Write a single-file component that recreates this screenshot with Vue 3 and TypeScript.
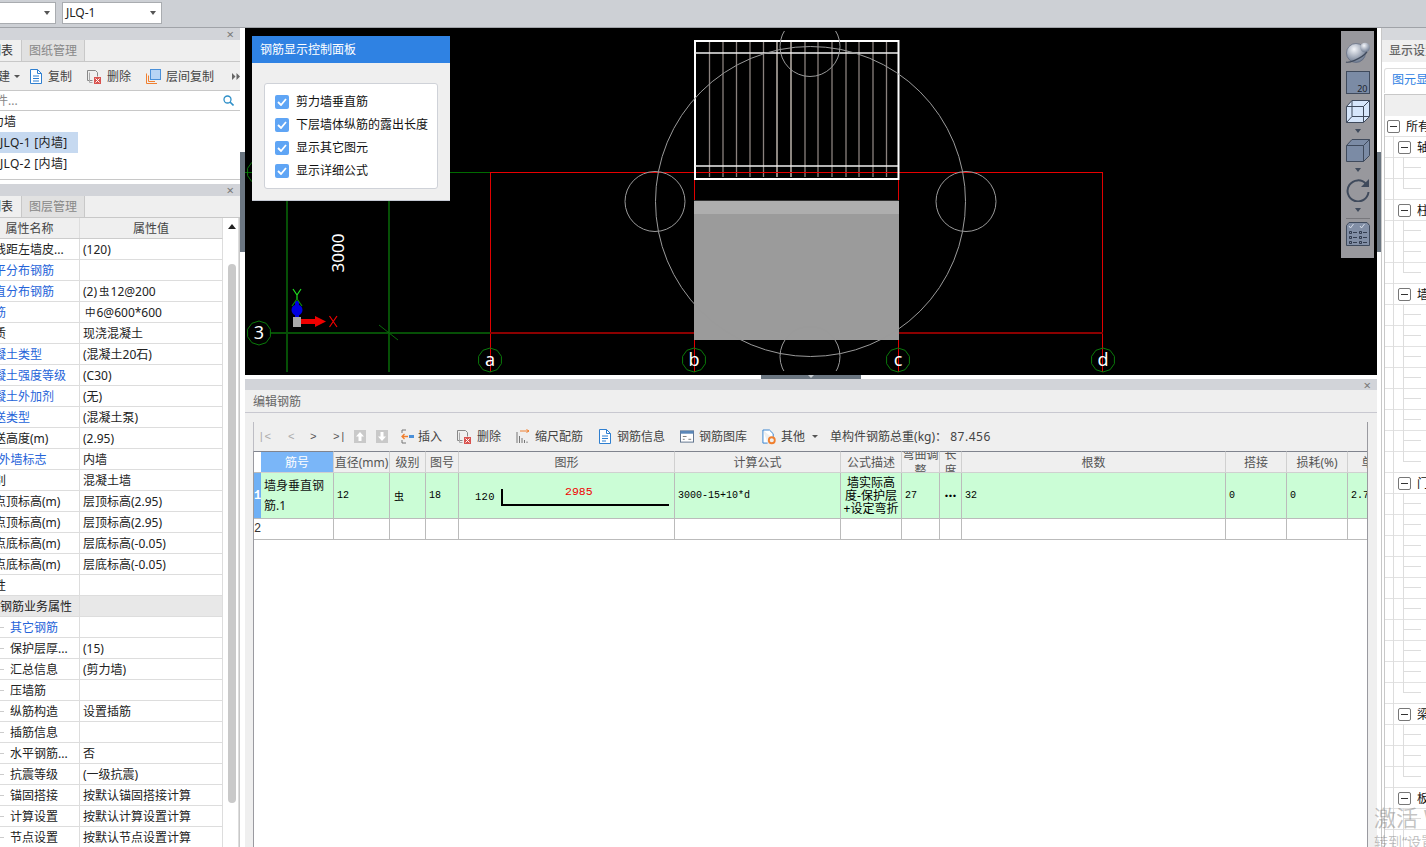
<script setup lang="ts">
interface Prop { n: string; v?: string; pre?: string; mark?: string; blue?: boolean; sub?: boolean; group?: boolean }
const props: Prop[] = [
  { n: '轴线距左墙皮...', v: '(120)' },
  { n: '水平分布钢筋', blue: true },
  { n: '垂直分布钢筋', v: '12@200', pre: '(2)', mark: '虫', blue: true },
  { n: '拉筋', v: '6@600*600', mark: '中', blue: true },
  { n: '材质', v: '现浇混凝土' },
  { n: '混凝土类型', v: '(混凝土20石)', blue: true },
  { n: '混凝土强度等级', v: '(C30)', blue: true },
  { n: '混凝土外加剂', v: '(无)', blue: true },
  { n: '泵送类型', v: '(混凝土泵)', blue: true },
  { n: '泵送高度(m)', v: '(2.95)' },
  { n: '内/外墙标志', v: '内墙', blue: true },
  { n: '类别', v: '混凝土墙' },
  { n: '起点顶标高(m)', v: '层顶标高(2.95)' },
  { n: '终点顶标高(m)', v: '层顶标高(2.95)' },
  { n: '起点底标高(m)', v: '层底标高(-0.05)' },
  { n: '终点底标高(m)', v: '层底标高(-0.05)' },
  { n: '属性' },
  { n: '钢筋业务属性', group: true },
  { n: '其它钢筋', blue: true, sub: true },
  { n: '保护层厚...', v: '(15)', sub: true },
  { n: '汇总信息', v: '(剪力墙)', sub: true },
  { n: '压墙筋', sub: true },
  { n: '纵筋构造', v: '设置插筋', sub: true },
  { n: '插筋信息', sub: true },
  { n: '水平钢筋...', v: '否', sub: true },
  { n: '抗震等级', v: '(一级抗震)', sub: true },
  { n: '锚固搭接', v: '按默认锚固搭接计算', sub: true },
  { n: '计算设置', v: '按默认计算设置计算', sub: true },
  { n: '节点设置', v: '按默认节点设置计算', sub: true },
]

const checks = ['剪力墙垂直筋', '下层墙体纵筋的露出长度', '显示其它图元', '显示详细公式']

const heads = ['筋号', '直径(mm)', '级别', '图号', '图形', '计算公式', '公式描述', '弯曲调整', '长度', '根数', '搭接', '损耗(%)', '单']

const parents: Record<number, string> = { 1: '轴', 4: '柱', 8: '墙', 17: '门', 28: '梁', 32: '板' }
const lastLeaf = new Set([3, 7, 16, 27, 31])
const treeRows = Array.from({ length: 35 }, (_, i) => ({
  i,
  label: i === 0 ? '所有' : parents[i] ?? '',
  root: i === 0,
  parent: i in parents,
  last: lastLeaf.has(i),
}))

const rebars = [709.5, 723, 736.5, 750, 763.5, 777, 791, 805, 818, 832, 846, 859, 873, 886.5]

function ngon(cx: number, cy: number, r: number, n = 10): string {
  return Array.from({ length: n }, (_, k) => {
    const a = (Math.PI * 2 * k) / n + Math.PI / n
    return `${(cx + r * Math.cos(a)).toFixed(1)},${(cy + r * Math.sin(a)).toFixed(1)}`
  }).join(' ')
}
const axes = [
  { x: 259, y: 172, t: '' },
  { x: 259, y: 333, t: '3' },
  { x: 490, y: 360, t: 'a' },
  { x: 694, y: 360, t: 'b' },
  { x: 898, y: 360, t: 'c' },
  { x: 1103, y: 360, t: 'd' },
]
</script>

<template>
  <div class="root">
    <header class="topbar">
      <div class="select first"><span class="caret"></span></div>
      <div class="select second"><span>JLQ-1</span><span class="caret"></span></div>
    </header>

    <div class="main">
      <aside class="left">
        <div class="left-inner">
          <section class="list-panel">
            <div class="strip"><span class="close">×</span></div>
            <div class="tabs">
              <span class="tab on">构件列表</span>
              <span class="tab">图纸管理</span>
            </div>
            <div class="ltools">
              <span class="tool new">新建<i class="caret small"></i></span>
              <span class="tool">
                <svg width="14" height="15" viewBox="0 0 14 15"><path d="M1.5.5h7l4 4v10h-11z" fill="#fff" stroke="#2f7fd0"/><path d="M8.5.5v4h4M4 7h6M4 9.5h6M4 12h6" fill="none" stroke="#2f7fd0"/></svg>
                复制
              </span>
              <span class="tool">
                <svg width="15" height="15" viewBox="0 0 15 15"><path d="M.5 1.5h8l2 2v4M.5 1.5v10h5" fill="none" stroke="#888"/><path d="M2.5 3.5v10h3" fill="none" stroke="#aaa"/><rect x="7" y="8" width="7" height="7" fill="#d9534f"/><path d="M8.5 9.5l4 4M12.5 9.5l-4 4" stroke="#fff"/></svg>
                删除
              </span>
              <span class="tool">
                <svg width="15" height="15" viewBox="0 0 15 15"><path d="M.5 14.5V4.500M.5 14.500H11" fill="none" stroke="#f08030" stroke-width="1"/><path d="M2.500 12.500V6.500M2.500 12.500H9" fill="none" stroke="#f08030"/><rect x="4.500" y=".5" width="10" height="10" fill="#b7d4f5" stroke="#4a90d9"/></svg>
                层间复制
              </span>
              <span class="more">
                <svg width="8" height="7" viewBox="0 0 8 7"><path d="M0 0l3.500 3.500L0 7zM4.500 0L8 3.500 4.500 7z" fill="#666"/></svg>
              </span>
            </div>
            <div class="search">
              <span>按名称搜索构件...</span>
              <svg width="11" height="11" viewBox="0 0 11 11"><circle cx="4.500" cy="4.500" r="3.500" fill="none" stroke="#2e8fc8" stroke-width="1.300"/><path d="M7 7l3.500 3.500" stroke="#2e8fc8" stroke-width="1.600"/></svg>
            </div>
            <div class="ltree">
              <div class="lrow root-node">剪力墙</div>
              <div class="lrow sel">JLQ-1 [内墙]</div>
              <div class="lrow leaf">JLQ-2 [内墙]</div>
            </div>
          </section>

          <section class="prop-panel">
            <div class="strip"><span class="close">×</span></div>
            <div class="tabs">
              <span class="tab on">属性列表</span>
              <span class="tab">图层管理</span>
            </div>
            <div class="prop-body">
              <div class="prop-table">
                <div class="prow phead"><div class="pn">属性名称</div><div class="pv">属性值</div></div>
                <div v-for="p in props" :key="p.n" class="prow" :class="{ grp: p.group }">
                  <div class="pn" :class="{ blue: p.blue, sub: p.sub, gname: p.group }">{{ p.n }}</div>
                  <div class="pv">{{ p.pre }}<span v-if="p.mark" class="mark">{{ p.mark }}</span>{{ p.v }}</div>
                </div>
              </div>
              <div class="vscroll">
                <i class="up"></i>
                <i class="thumb"></i>
              </div>
            </div>
          </section>
        </div>
      </aside>

      <div class="split"><i class="handle"></i></div>

      <main class="center">
        <div class="canvas">
          <svg class="drawing" width="1132" height="347" viewBox="245 28 1132 347">
            <defs>
              <clipPath id="arcs"><rect x="245" y="31" width="1132" height="340" /></clipPath>
            </defs>
            <path d="M245 172.500H490" stroke="#006a00" fill="none" />
            <path d="M287 172V372M389 172V372M271 333H490" stroke="#064f06" stroke-width="2" fill="none" />
            <path d="M379 325l19 15" stroke="#0a6a0a" fill="none" />
            <g fill="none">
              <path d="M490.500 172V372M1102.500 172V372M694.500 179V372M898.500 179V372" stroke="#e00000" />
              <path d="M490 333H694M898 333H1103" stroke="#8b0000" stroke-width="2" />
            </g>
            <rect x="694" y="201" width="205" height="139" fill="#9b9b9b" />
            <rect x="694" y="201" width="205" height="13" fill="#aeaeae" />
            <rect x="694" y="200" width="205" height="1" fill="#333" />
            <g stroke="#8a827e" stroke-width="1.300">
              <line v-for="x in rebars" :key="x" :x1="x" y1="42" :x2="x" y2="177" />
            </g>
            <path d="M791 42V177M777 42V177" stroke="#c0b8b0" />
            <path d="M490 172.500H1103" stroke="#e80000" fill="none" />
            <rect x="695" y="41" width="203.500" height="138" fill="none" stroke="#fff" stroke-width="2" />
            <path d="M695 53H898M695 166H898" stroke="#eee" stroke-width="1.500" />
            <g fill="none" stroke="#9a9a9a" stroke-width="1" clip-path="url(#arcs)">
              <circle cx="810.500" cy="201.500" r="155" />
              <circle cx="655" cy="201.500" r="30" />
              <circle cx="966" cy="201.500" r="30" />
              <circle cx="810" cy="46.500" r="30" />
              <circle cx="810" cy="356.500" r="30" />
            </g>
            <g v-for="a in axes" :key="a.x + '-' + a.y">
              <polygon :points="ngon(a.x, a.y, 12)" fill="none" stroke="#0a7a0a" />
              <text :x="a.x" :y="a.y + 6" class="axis-label">{{ a.t }}</text>
            </g>
            <text class="dim" transform="translate(343.500 272.500) rotate(-90)">3000</text>
            <g>
              <path d="M293 289l4 6 4-6M297 295v5" fill="none" stroke="#20e020" stroke-width="1.200" />
              <rect x="293" y="317" width="8" height="10" fill="#aaa" />
              <path d="M297 301v16" stroke="#0000e0" stroke-width="4" />
              <circle cx="297" cy="310" r="5.500" fill="#0000e0" />
              <path d="M292 306l5-7 5 7" fill="none" stroke="#0a8a0a" stroke-width="1.200" />
              <path d="M301 321.500h15" stroke="#f00000" stroke-width="5" />
              <path d="M315 316l11 5.500-11 5.500z" fill="#f00000" />
              <path d="M329.500 316l7.500 11M337 316l-7.500 11" stroke="#f00000" stroke-width="1.200" />
            </g>
          </svg>

          <div class="ctrl">
            <div class="ctrl-title">钢筋显示控制面板</div>
            <div class="ctrl-body">
              <div class="ctrl-box">
                <label v-for="c in checks" :key="c" class="chk">
                  <span class="box">
                    <svg width="10" height="8" viewBox="0 0 10 8"><path d="M1 4l3 3 5-6" fill="none" stroke="#fff" stroke-width="1.800" /></svg>
                  </span>
                  {{ c }}
                </label>
              </div>
            </div>
          </div>

          <div class="view-tools">
            <svg width="26" height="22" viewBox="0 0 26 22">
              <defs>
                <radialGradient id="ball" cx=".4" cy=".3" r=".8"><stop offset="0" stop-color="#f4f6fa" /><stop offset="1" stop-color="#5c6a82" /></radialGradient>
              </defs>
              <circle cx="11" cy="12" r="9.500" fill="url(#ball)" stroke="#56627a" stroke-width=".6" />
              <circle cx="20" cy="6.500" r="4.800" fill="url(#ball)" />
              <path d="M1 21C3 22 15 19 22 11" fill="none" stroke="#3f4a5c" stroke-width="1.200" />
            </svg>
            <div class="sq twod"><span>20</span></div>
            <svg class="block" width="24" height="23" viewBox="0 0 24 23"><path d="M.5 6.500L6 .5h17.500v16l-6 6H.5z" fill="#d6e6fb" stroke="#3f4a5c"/><path d="M.5 6.500h17v16M17.500 6.500l6-6M6 .5v16h17.500M6 16.500l-5.500 6" fill="none" stroke="#3f4a5c"/></svg>
            <i class="caret dark"></i>
            <svg class="block" width="24" height="23" viewBox="0 0 24 23"><path d="M.5 6.500L6 .5h17.500v16l-6 6H.5z" fill="#7b8ba5" stroke="#3f4a5c"/><path d="M.5 6.500h17v16M17.500 6.500l6-6" fill="none" stroke="#3f4a5c"/></svg>
            <i class="caret dark"></i>
            <svg class="block" width="24" height="24" viewBox="0 0 24 24"><path d="M20 6A10.500 10.500 0 1 0 22.500 14" fill="none" stroke="#3f4a5c" stroke-width="2"/><path d="M23 1v8h-8z" fill="#3f4a5c"/></svg>
            <i class="caret dark"></i>
            <i class="divider"></i>
            <svg class="block" width="24" height="24" viewBox="0 0 24 24"><path d="M3 .5h18l2.500 3v20H.5v-20z" fill="#828fa6" stroke="#3f4a5c"/><path d="M3 4l1.500 2 3-4M14 4l1.500 2 3-4" fill="none" stroke="#e8eef8" stroke-width=".8"/><path d="M3.500 9.500h2v2h-2zM3.500 14.500h2v2h-2zM3.500 19.500h2v2h-2zM13.500 9.500h2v2h-2zM13.500 14.500h2v2h-2zM13.500 19.500h2v2h-2zM7 10.500h4M7 15.500h4M7 20.500h4M17 10.500h4M17 15.500h4M17 20.500h4" fill="none" stroke="#20283a" stroke-width=".8"/></svg>
          </div>
        </div>

        <div class="hsplit"><i class="hhandle"><b></b></i></div>

        <section class="editor">
          <div class="strip short"><span class="close">×</span></div>
          <div class="ed-title">编辑钢筋</div>
          <div class="ed-body">
            <div class="etools">
              <span class="nav">
                <i class="n1">|&lt;</i><i class="n2">&lt;</i><i class="n3">&gt;</i><i class="n4">&gt;|</i>
              </span>
              <svg class="updn" width="12" height="13" viewBox="0 0 12 13"><rect width="12" height="13" fill="#c9c9c9"/><path d="M6 2L2 6.500h2.500V11h3V6.500H10z" fill="#fff"/></svg>
              <svg class="updn second-updn" width="12" height="13" viewBox="0 0 12 13"><rect width="12" height="13" fill="#c9c9c9"/><path d="M6 11l4-4.500H7.500V2h-3v4.500H2z" fill="#fff"/></svg>
              <span class="etool first-tool">
                <svg width="13" height="15" viewBox="0 0 13 15"><path d="M5 1H1v3M1 11v3h4" fill="none" stroke="#777"/><path d="M7 7.500H1M3.500 5L1 7.500 3.500 10" fill="none" stroke="#f08030" stroke-width="1.300"/><rect x="8" y="6" width="5" height="3" fill="#4a90d9"/></svg>
                插入
              </span>
              <span class="etool">
                <svg width="15" height="15" viewBox="0 0 15 15"><path d="M.5 1.500h8l2 2v4M.5 1.500v10h5" fill="none" stroke="#888"/><path d="M2.500 3.500v10h3" fill="none" stroke="#aaa"/><rect x="7" y="8" width="7" height="7" fill="#d9534f"/><path d="M8.500 9.500l4 4M12.500 9.500l-4 4" stroke="#fff"/></svg>
                删除
              </span>
              <span class="etool">
                <svg width="14" height="15" viewBox="0 0 14 15"><path d="M1 3v11M3.500 7v7M6 9v5M8.500 11v3M11 12.500V14" stroke="#777"/><path d="M4 2h9M10.500 .5L13 2l-2.500 1.500" fill="none" stroke="#f08030"/></svg>
                缩尺配筋
              </span>
              <span class="etool">
                <svg width="14" height="15" viewBox="0 0 14 15"><path d="M1.500 .5h7l4 4v10h-11z" fill="#fff" stroke="#2f7fd0"/><path d="M8.500 .5v4h4M4 7h6M4 9.500h6M4 12h4" fill="none" stroke="#2f7fd0"/></svg>
                钢筋信息
              </span>
              <span class="etool">
                <svg width="14" height="13" viewBox="0 0 15 13"><rect x=".5" y=".5" width="14" height="12" fill="#fff" stroke="#5b6f8a"/><rect x=".5" y=".5" width="14" height="3" fill="#5b87b8"/><path d="M3 6.500h4M3 9.500h2M9 9.500h3" stroke="#777"/></svg>
                钢筋图库
              </span>
              <span class="etool">
                <svg width="14" height="16" viewBox="0 0 15 16"><path d="M1 .5h7l4 4v5M1 .5v14h5" fill="#fff" stroke="#2f7fd0"/><circle cx="10.500" cy="11.500" r="3.200" fill="none" stroke="#f08030" stroke-width="2"/></svg>
                其他<i class="caret small gap"></i>
              </span>
              <span class="weight">单构件钢筋总重(kg)：&nbsp;<span class="num">87.456</span></span>
            </div>

            <div class="grid">
              <div class="cell corner"></div>
              <div v-for="(h, i) in heads" :key="h" class="cell hd" :class="{ active: i === 0 }"><span>{{ h }}</span></div>

              <div class="cell rownum cur">1</div>
              <div class="cell g cjk">墙身垂直钢筋.1</div>
              <div class="cell g mono">12</div>
              <div class="cell g mono mid"><span class="grade">虫</span></div>
              <div class="cell g mono">18</div>
              <div class="cell g shape">
                <span class="shape-n">120</span>
                <span class="shape-bar"><em>2985</em></span>
              </div>
              <div class="cell g mono">3000-15+10*d</div>
              <div class="cell g desc">墙实际高度-保护层+设定弯折</div>
              <div class="cell g mono">27</div>
              <div class="cell g dots">···</div>
              <div class="cell g mono">32</div>
              <div class="cell g mono">0</div>
              <div class="cell g mono">0</div>
              <div class="cell g mono">2.7</div>

              <div class="cell rownum">2</div>
              <div v-for="n in 13" :key="n" class="cell blank"></div>
            </div>
          </div>
        </section>
      </main>

      <div class="split thin"><i class="handle"></i></div>

      <aside class="right">
        <div class="strip"></div>
        <div class="r-title">显示设置</div>
        <div class="r-tabs"><span class="r-tab">图元显示</span></div>
        <div class="r-tree">
          <div class="r-head"></div>
          <div v-for="r in treeRows" :key="r.i" class="r-row">
            <template v-if="r.root">
              <i class="minus"></i><span class="r-label">{{ r.label }}</span>
            </template>
            <template v-else-if="r.parent">
              <i class="r-guide"></i><i class="minus"></i><span class="r-label">{{ r.label }}</span>
            </template>
            <template v-else>
              <i class="r-guide"></i><i class="twig" :class="{ last: r.last }"></i>
            </template>
          </div>
        </div>
      </aside>
    </div>

    <div class="watermark">
      <div class="wm1">激活 Windows</div>
      <div class="wm2">转到“设置”以激活</div>
    </div>
  </div>
</template>

<style>
html, body { margin: 0; padding: 0; background: #fff; }
</style>

<style scoped>
.root {
  position: relative;
  width: 1426px;
  height: 847px;
  overflow: hidden;
  display: flex;
  flex-direction: column;
  font: 12px/21px "Noto Sans", "Noto Sans CJK SC", sans-serif;
  color: #222;
  background: #fff;
}
i { display: block; font-style: normal; }
.block { display: block; flex: none; }
.caret { width: 0; height: 0; border: 3.5px solid transparent; border-top: 4px solid #555; border-bottom: 0; }
.caret.small { border-width: 3px; border-top-width: 3px; border-bottom: 0; }
.caret.dark { border-top-color: #3f4a5c; }

.topbar {
  flex: none;
  display: flex;
  align-items: flex-start;
  gap: 6px;
  padding-top: 2px;
  height: 25px;
  background: #cdd0d5;
  border-bottom: 1px solid #a0a3a8;
}
.select {
  height: 22px;
  box-sizing: border-box;
  background: #fff;
  border: 1px solid #a9acb0;
  display: flex;
  align-items: center;
  justify-content: space-between;
  padding: 0 5px 0 3px;
  line-height: 22px;
}
.select.first { width: 57px; margin-left: -1px; justify-content: flex-end; }
.select.second { width: 100px; }

.main { flex: 1; display: flex; min-height: 0; }

.left { width: 240px; flex: none; overflow: hidden; }
.left-inner { width: 260px; margin-left: -20px; }

.strip {
  height: 12px;
  background: #d2d4d9;
  position: relative;
  line-height: 12px;
}
.strip.short { height: 11px; }
.close { position: absolute; right: 6px; top: 1px; font-size: 13px; line-height: 11px; color: #777; }

.tabs {
  height: 21px;
  display: flex;
  background: #efefef;
  border-bottom: 1px solid #c8c8c8;
}
.tab { width: 63px; box-sizing: border-box; text-align: center; color: #888; background: #e1e1e1; border-right: 1px solid #c8c8c8; line-height: 22px; white-space: nowrap; }
.tab.on { width: 42px; flex: none; padding-right: 8px; background: #efefef; color: #333; text-align: right; direction: rtl; overflow: hidden; }

.ltools {
  height: 28px;
  background: #efefef;
  border-bottom: 1px solid #c8c8c8;
  display: flex;
  align-items: center;
  gap: 15px;
  padding-left: 6px;
  color: #444;
  white-space: nowrap;
}
.tool { display: flex; align-items: center; gap: 5px; }
.tool.new { width: 29px; gap: 4px; margin-right: -1px; }
.more { margin-left: 3px; display: flex; }

.search {
  height: 19px;
  display: flex;
  align-items: center;
  justify-content: space-between;
  color: #888;
  border-bottom: 1px solid #c8c8c8;
  overflow: hidden;
}
.search span { margin-left: -56px; line-height: 19px; white-space: nowrap; }
.search svg { margin-right: 6px; flex: none; }

.ltree { height: 68px; border-bottom: 1px solid #c8c8c8; }
.lrow { height: 21px; line-height: 21px; }
.lrow.sel { padding-left: 20px; width: 78px; background: #c6d9f0; white-space: nowrap; letter-spacing: .3px; }
.lrow.leaf { padding-left: 20px; letter-spacing: .3px; }

.prop-panel { margin-top: 4px; }
.prop-body { display: flex; border-right: 1px solid #c8c8c8; }
.prop-table { width: 243px; flex: none; }
.prow { display: flex; height: 21px; box-sizing: border-box; border-bottom: 1px solid #ddd; border-right: 1px solid #ddd; }
.phead { background: #efefef; border-bottom: 1px solid #ccc; color: #444; }
.phead .pn, .phead .pv { text-align: center; padding: 0; }
.grp { background: #e8e8e8; }
.pn { width: 100px; flex: none; box-sizing: border-box; padding-left: 2px; border-right: 1px solid #ddd; white-space: nowrap; line-height: 22px; overflow: hidden; position: relative; }
.pn.blue { color: #2563d9; }
.pn.sub { padding-left: 30px; }
.pn.sub::before { content: ""; position: absolute; left: 20px; top: 10px; width: 4px; border-top: 1px solid #ccc; }
.pn.gname { padding-left: 20px; }
.pv { flex: 1; padding-left: 3px; line-height: 22px; white-space: nowrap; overflow: hidden; }
.mark { font-size: 10.500px; position: relative; top: -1px; margin: 0 1px 0 2px; }
.vscroll { flex: 1; position: relative; background: #fff; border-right: 1px solid #ddd; }
.up { position: absolute; left: 5px; top: 0; margin-top: 6px; width: 0; height: 0; border: 4px solid transparent; border-top: 0; border-bottom: 5px solid #222; }
.thumb { position: absolute; left: 5px; top: 46px; width: 8px; height: 539px; border-radius: 4px; background: #c9c9c9; }

.split { width: 5px; flex: none; background: #fff; }
.split.thin { width: 4px; }
.handle { margin-top: 124px; height: 100px; background: #6b7681; }

.center { width: 1132px; flex: none; display: flex; flex-direction: column; min-height: 0; }
.canvas { position: relative; height: 347px; flex: none; background: #000; overflow: hidden; }
.drawing { display: block; }
.axis-label { fill: #fff; font: 18px "Noto Sans", sans-serif; text-anchor: middle; }
.dim { fill: #fff; font: 17px "Noto Sans", sans-serif; }

.ctrl {
  position: absolute;
  left: 7px;
  top: 8px;
  width: 198px;
  height: 165px;
  background: #efefef;
  box-sizing: border-box;
  border-bottom: 1px solid #c5c9d3;
  display: flex;
  flex-direction: column;
}
.ctrl-title { height: 27px; background: #2f82e3; color: #fff; line-height: 27px; padding-left: 8px; }
.ctrl-body { padding: 20px 12px 0; }
.ctrl-box {
  height: 106px;
  box-sizing: border-box;
  background: #fff;
  border: 1px solid #cfd2d8;
  border-radius: 3px;
  padding: 7px 0 0 10px;
  display: flex;
  flex-direction: column;
  gap: 2px;
}
.chk { display: flex; align-items: center; gap: 7px; height: 21px; color: #111; white-space: nowrap; line-height: 21px; }
.box { width: 14px; height: 14px; border-radius: 2px; background: #5fa5f5; display: flex; align-items: center; justify-content: center; }

.view-tools {
  position: absolute;
  left: 1096px;
  top: 3px;
  width: 33px;
  height: 227px;
  box-sizing: border-box;
  background: #98989d;
  padding-top: 10px;
  display: flex;
  flex-direction: column;
  align-items: center;
}
.sq { width: 24px; height: 23px; box-sizing: border-box; margin-top: 8px; margin-bottom: 6px; flex: none; }
.twod { background: #7b8ba5; border: 1px solid #3f4a5c; position: relative; }
.twod span { position: absolute; right: 1px; bottom: -2px; font-size: 9px; line-height: 12px; color: #1c2430; }
.view-tools .caret { margin: 6px 0; flex: none; }
.divider { width: 24px; border-top: 1px solid #77777c; margin: 0 0 3px; flex: none; }

.hsplit { height: 4px; flex: none; background: #fff; display: flex; justify-content: center; }
.hhandle { width: 100px; height: 4px; background: #6b7681; display: flex; justify-content: center; }
.hhandle b { width: 0; height: 0; border: 3px solid transparent; border-top: 3px solid #c8cdd2; border-bottom: 0; }

.editor { flex: 1; min-height: 0; display: flex; flex-direction: column; }
.ed-title { height: 22px; background: #efefef; border-bottom: 1px solid #c8c8d0; padding-left: 8px; color: #666; line-height: 23px; }
.ed-body { flex: 1; min-height: 0; background: #efefef; padding: 0 9px 0 8px; display: flex; flex-direction: column; }
.etools {
  flex: none;
  display: flex;
  align-items: center;
  box-sizing: border-box;
  border-left: 1px solid #bdbdc4;
  border-right: 1px solid #9a9aa0;
  margin-top: 9px;
  height: 29px;
  color: #444;
  white-space: nowrap;
  padding-left: 4px;
}
.nav { display: flex; width: 88px; font: 11px "Liberation Mono", monospace; color: #555; flex: none; }
.nav .n1 { width: 30px; color: #aaa; }
.nav .n2 { width: 22px; color: #aaa; }
.nav .n3 { width: 23px; }
.nav .n4 { width: 13px; }
.updn { flex: none; margin-left: 8px; }
.second-updn { margin-left: 10px; }
.etool { display: flex; align-items: center; gap: 5px; margin-left: 15px; }
.first-tool { margin-left: 13px; gap: 4px; }
.gap { margin-left: 2px; }
.weight { margin-left: 12px; color: #444; }
.num { letter-spacing: .5px; }

.grid {
  flex: 1;
  min-height: 0;
  display: grid;
  grid-template-columns: 7px 73px 56px 36px 33px 216px 166px 61px 38px 22px 264px 61px 61px 40px;
  grid-template-rows: 22px 46px 21px;
  align-content: start;
  background: #fff;
  border-left: 1px solid #9a9aa0;
  border-right: 1px solid #9a9aa0;
  overflow: hidden;
  box-sizing: border-box;
}
.cell { box-sizing: border-box; border-right: 1px solid #bbb; border-bottom: 1px solid #bbb; overflow: hidden; display: flex; align-items: center; }
.corner { background: #fff; border-top: 1px solid #80848e; border-right: 0; }
.hd { background: #efefef; border-top: 1px solid #80848e; border-right-color: #d0d0d0; border-bottom-color: #d0d0d0; justify-content: center; text-align: center; color: #555; line-height: 16px; padding-top: 1px; }
.hd.active { background: #7ab6f8; color: #fff; }
.rownum { border-right: 0; padding: 0; justify-content: center; font: 12px "Liberation Mono", monospace; background: #fff; color: #333; }
.rownum.cur { background: #6fb0f5; color: #fff; font-weight: 700; }
.g { background: #cbfdd6; }
.cjk { padding: 0 3px; line-height: 20px; color: #111; }
.mono { font: 10px "Liberation Mono", monospace; padding-left: 3px; color: #000; white-space: nowrap; }
.mid { padding-left: 4px; }
.grade { font: 10px "Noto Sans CJK SC", sans-serif; }
.shape { padding-left: 16px; gap: 6px; align-items: center; }
.shape-n { font: 10.500px "Liberation Mono", monospace; letter-spacing: .3px; color: #000; margin-top: 2px; }
.shape-bar { position: relative; width: 168px; height: 17px; flex: none; box-sizing: border-box; border-left: 2px solid #000; border-bottom: 2px solid #000; margin-top: 3px; display: flex; justify-content: center; }
.shape-bar em { font: normal 11.500px/14px "Liberation Mono", monospace; color: #f00000; margin-top: -4px; margin-right: 14px; }
.desc { line-height: 13px; text-align: center; color: #000; padding: 0 2px; }
.dots { justify-content: center; font-weight: 700; color: #000; font-size: 14px; }
.blank { background: #fff; height: 21px; }

.right { flex: 1; min-width: 0; overflow: hidden; border-left: 1px solid #c8c8c8; }
.right .strip { height: 12px; background: #d6d8dc; }
.r-title { height: 22px; background: #efefef; color: #666; padding-left: 7px; line-height: 22px; white-space: nowrap; width: 100px; font-weight: 500; }
.r-tabs { height: 32px; background: #fff; padding-left: 2px; box-sizing: border-box; width: 100px; padding-top: 6px; }
.r-tab { display: block; height: 24px; border: 1px solid #ddd; border-bottom: 0; border-radius: 3px 3px 0 0; padding-left: 7px; color: #2f82e3; line-height: 22px; white-space: nowrap; }
.r-tree { margin-left: 2px; border-left: 1px solid #c8c8c8; width: 100px; }
.r-head { height: 22px; box-sizing: border-box; background: #efefef; border-top: 1px solid #c8c8c8; }
.r-row { height: 21px; box-sizing: border-box; border-bottom: 1px solid #e2e2e2; display: flex; align-items: center; padding-left: 2px; position: relative; white-space: nowrap; }
.minus { width: 13px; height: 13px; box-sizing: border-box; border: 1px solid #777; border-radius: 2px; position: relative; flex: none; background: #fff; z-index: 1; }
.minus::after { content: ""; position: absolute; left: 2px; right: 2px; top: 5px; border-top: 1px solid #333; }
.r-label { margin-left: 6px; color: #111; }
.r-guide { width: 9px; height: 21px; border-left: 1px solid #ddd; margin-left: 6px; margin-top: -1px; margin-right: -5px; flex: none; }
.r-row:has(.twig) .r-guide { margin-right: 0; }
.twig { width: 17px; height: 21px; margin-top: -1px; border-left: 1px solid #ddd; position: relative; flex: none; }
.twig::after { content: ""; position: absolute; left: 0; right: 0; top: 10px; border-top: 1px solid #ddd; }
.twig.last { height: 11px; margin-top: -11px; }
.twig.last::after { top: auto; bottom: 0; }

.watermark { position: absolute; left: 1374px; top: 802px; color: rgba(110, 110, 110, .42); white-space: nowrap; pointer-events: none; }
.wm1 { font-size: 22px; line-height: 30px; }
.wm2 { font-size: 14px; line-height: 20px; }
</style>
